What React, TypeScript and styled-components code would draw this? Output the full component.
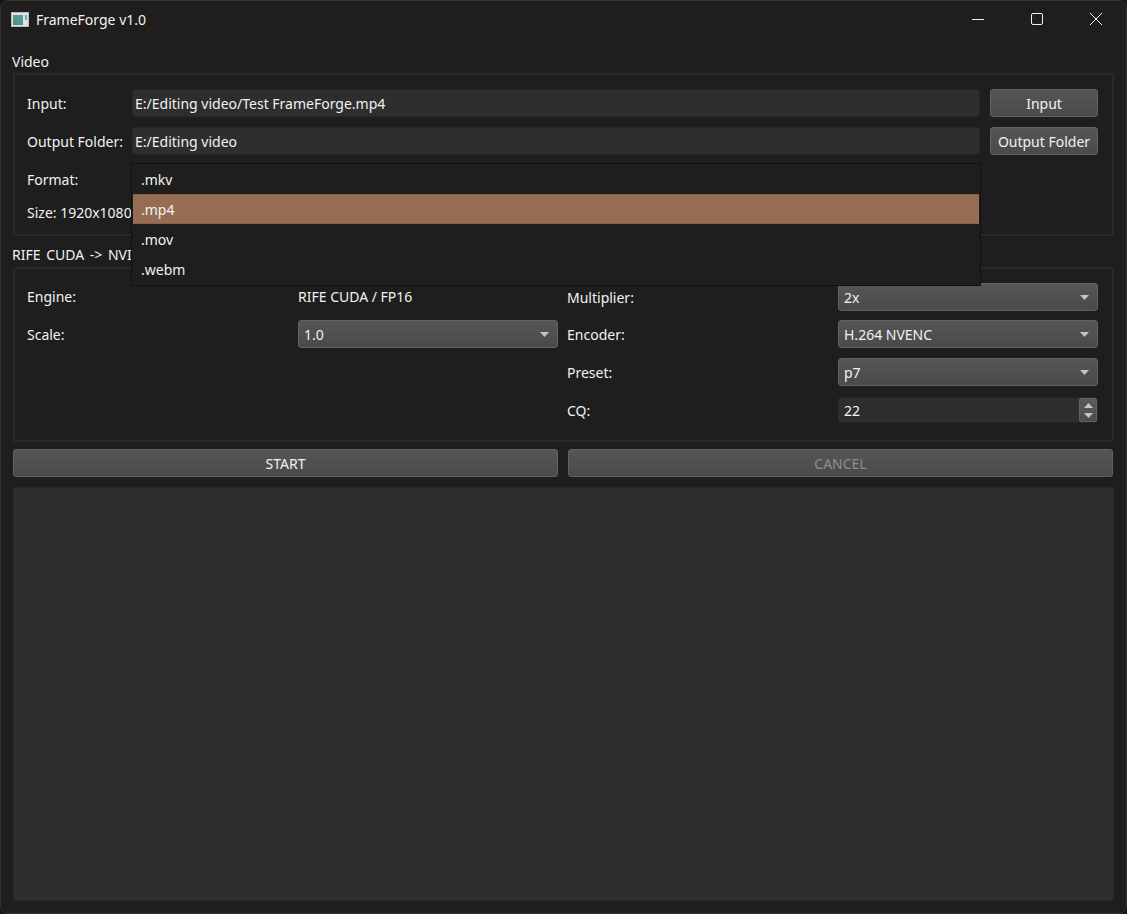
import styled, { createGlobalStyle } from 'styled-components'

const GlobalStyle = createGlobalStyle`
  html, body {
    margin: 0;
    padding: 0;
    background: #161616;
  }
  * {
    box-sizing: border-box;
  }
`

const Window = styled.div`
  width: 1127px;
  height: 914px;
  display: flex;
  flex-direction: column;
  background: #1e1e1e;
  border: 1px solid #333;
  border-radius: 8px;
  overflow: hidden;
  color: #f2f2f2;
  font-family: 'Noto Sans', 'Open Sans', sans-serif;
  font-size: 14px;
`

const TitleBar = styled.header`
  height: 36px;
  flex: none;
  display: flex;
  align-items: center;
  padding-left: 10px;
  background: linear-gradient(#201e1d, #1f1e1d);
`

const TitleText = styled.span`
  margin-left: 7px;
  font-size: 14px;
`

const WindowButtons = styled.div`
  margin-left: auto;
  margin-right: 1px;
  display: flex;
`

const WindowButton = styled.div`
  width: 59px;
  height: 36px;
  display: flex;
  align-items: center;
  justify-content: center;
`

const Content = styled.main`
  flex: 1;
  min-height: 0;
  display: flex;
  flex-direction: column;
  padding: 15px 12px 12px 12px;
`

const GroupTitle = styled.div`
  height: 20px;
  line-height: 20px;
  margin-left: -1px;
  word-spacing: 2px;
`

const Group = styled.section`
  margin-top: 2px;
  border: 2px solid #292929;
  border-radius: 3px;
`

const VideoGroup = styled(Group)`
  padding: 14px 14px 13px 12px;
  margin-top: 1px;
  margin-bottom: 9px;
  display: flex;
  flex-direction: column;
  gap: 10px;
`

const Row = styled.div`
  display: flex;
  align-items: center;
  height: 28px;
`

const SizeRow = styled(Row)`
  height: 18px;
`

const RowLabel = styled.label`
  width: 105px;
  flex: none;
`

const Field = styled.div`
  flex: 1;
  height: 100%;
  display: flex;
  align-items: center;
  padding-left: 2px;
  background: #2e2e2e;
  border: 1px solid #272727;
  border-radius: 3px;
`

const RaisedButton = styled.button<{ $disabled?: boolean }>`
  height: 28px;
  padding: 0;
  border: 1px solid #626262;
  border-radius: 3px;
  background: linear-gradient(#565656, #4a4a4a);
  color: ${p => (p.$disabled ? '#8e8e8e' : '#f2f2f2')};
  font: inherit;
`

const BrowseButton = styled(RaisedButton)`
  width: 108px;
  flex: none;
  margin-left: 10px;
`

const FormatSlot = styled.div`
  position: relative;
  flex: 1;
  height: 100%;
  margin-right: 118px;
`

const PopupList = styled.ul`
  position: absolute;
  left: -1px;
  right: -1px;
  top: -2px;
  z-index: 2;
  margin: 0;
  padding: 0 1px 1px;
  list-style: none;
  background: #1e1e1e;
  border: 1px solid #111;
`

const PopupItem = styled.li<{ $active?: boolean }>`
  height: 30px;
  display: flex;
  align-items: center;
  padding-left: 8px;
  background: ${p => (p.$active ? '#966d53' : 'transparent')};
  border: 1px solid ${p => (p.$active ? '#86614a' : 'transparent')};
  border-width: 1px 0;
`

const EncodeGroup = styled(Group)`
  padding: 14px 14px 16px 12px;
  display: flex;
  gap: 9px;
`

const EncodeColumn = styled.div`
  display: flex;
  flex-direction: column;
  gap: 10px;
`

const EncodeRow = styled.div`
  display: grid;
  grid-template-columns: 271px 260px;
  align-items: center;
  height: 28px;
  &:first-child {
    height: 27px;
  }
`

const Combo = styled.div`
  height: 28px;
  display: flex;
  align-items: center;
  justify-content: space-between;
  padding: 0 8px 0 5px;
  border: 1px solid #626262;
  border-radius: 3px;
  background: linear-gradient(#565656, #4a4a4a);
`

const Caret = styled.svg`
  display: block;
`

const Spin = styled.div`
  height: 26px;
  display: flex;
  align-items: stretch;
  background: #2e2e2e;
  border: 1px solid #272727;
  border-radius: 3px;
`

const SpinValue = styled.div`
  flex: 1;
  display: flex;
  align-items: center;
  padding-left: 5px;
`

const SpinButtons = styled.div`
  width: 18px;
  display: flex;
  flex-direction: column;
  align-items: center;
  justify-content: center;
  gap: 5px;
  background: linear-gradient(#5a5a5a, #4c4c4c);
  border: 1px solid #626262;
  border-radius: 2px;
`

const ActionRow = styled.div`
  display: flex;
  gap: 10px;
  margin-top: 7px;
  padding-right: 1px;
`

const ActionButton = styled(RaisedButton)`
  flex: 1;
`

const LogPanel = styled.div`
  flex: 1;
  margin-top: 10px;
  background: #2e2e2e;
  border: 1px solid #272727;
`

const CaretDown = () => (
  <Caret width="9" height="5" viewBox="0 0 9 5">
    <path d="M0 0h9L4.5 5z" fill="#c4c4c4" />
  </Caret>
)

const SpinArrow = ({ up }: { up?: boolean }) => (
  <Caret width="9" height="5" viewBox="0 0 9 5">
    <path d={up ? 'M0 5h9L4.5 0z' : 'M0 0h9L4.5 5z'} fill="#c4c4c4" />
  </Caret>
)

const AppIcon = () => (
  <svg width="18" height="15" viewBox="0 0 18 15">
    <defs>
      <linearGradient id="pane" x1="1" y1="0" x2="0" y2="1">
        <stop offset="0" stopColor="#5f9db4" />
        <stop offset="1" stopColor="#3f9a6a" />
      </linearGradient>
    </defs>
    <rect x="0.5" y="0.5" width="17" height="14" fill="#dfe3e6" stroke="#b9bdc0" />
    <rect x="2" y="3" width="10" height="10" fill="url(#pane)" />
    <rect x="14" y="3" width="2" height="5" fill="#6fa8c8" />
  </svg>
)

const formats = ['.mkv', '.mp4', '.mov', '.webm']

const App = () => {
  return (
    <>
      <GlobalStyle />
      <Window>
        <TitleBar>
          <AppIcon />
          <TitleText>FrameForge v1.0</TitleText>
          <WindowButtons>
            <WindowButton>
              <svg width="12" height="12" viewBox="0 0 12 12">
                <path d="M0 6.5h12" stroke="#f0f0f0" />
              </svg>
            </WindowButton>
            <WindowButton>
              <svg width="12" height="12" viewBox="0 0 12 12">
                <rect x="0.5" y="0.5" width="11" height="11" rx="1.5" fill="none" stroke="#f0f0f0" />
              </svg>
            </WindowButton>
            <WindowButton>
              <svg width="12" height="12" viewBox="0 0 12 12">
                <path d="M0 0l12 12M12 0L0 12" stroke="#f0f0f0" />
              </svg>
            </WindowButton>
          </WindowButtons>
        </TitleBar>
        <Content>
          <GroupTitle>Video</GroupTitle>
          <VideoGroup>
            <Row>
              <RowLabel>Input:</RowLabel>
              <Field>E:/Editing video/Test FrameForge.mp4</Field>
              <BrowseButton>Input</BrowseButton>
            </Row>
            <Row>
              <RowLabel>Output Folder:</RowLabel>
              <Field>E:/Editing video</Field>
              <BrowseButton>Output Folder</BrowseButton>
            </Row>
            <Row>
              <RowLabel>Format:</RowLabel>
              <FormatSlot>
                <PopupList>
                  {formats.map(f => (
                    <PopupItem key={f} $active={f === '.mp4'}>
                      {f}
                    </PopupItem>
                  ))}
                </PopupList>
              </FormatSlot>
            </Row>
            <SizeRow>Size: 1920x1080</SizeRow>
          </VideoGroup>
          <GroupTitle>RIFE CUDA -&gt; NVIDIA NVENC</GroupTitle>
          <EncodeGroup>
            <EncodeColumn>
              <EncodeRow>
                <span>Engine:</span>
                <span>RIFE CUDA / FP16</span>
              </EncodeRow>
              <EncodeRow>
                <span>Scale:</span>
                <Combo>
                  1.0
                  <CaretDown />
                </Combo>
              </EncodeRow>
            </EncodeColumn>
            <EncodeColumn>
              <EncodeRow>
                <span>Multiplier:</span>
                <Combo>
                  2x
                  <CaretDown />
                </Combo>
              </EncodeRow>
              <EncodeRow>
                <span>Encoder:</span>
                <Combo>
                  H.264 NVENC
                  <CaretDown />
                </Combo>
              </EncodeRow>
              <EncodeRow>
                <span>Preset:</span>
                <Combo>
                  p7
                  <CaretDown />
                </Combo>
              </EncodeRow>
              <EncodeRow>
                <span>CQ:</span>
                <Spin>
                  <SpinValue>22</SpinValue>
                  <SpinButtons>
                    <SpinArrow up />
                    <SpinArrow />
                  </SpinButtons>
                </Spin>
              </EncodeRow>
            </EncodeColumn>
          </EncodeGroup>
          <ActionRow>
            <ActionButton>START</ActionButton>
            <ActionButton $disabled>CANCEL</ActionButton>
          </ActionRow>
          <LogPanel />
        </Content>
      </Window>
    </>
  )
}

export default App
